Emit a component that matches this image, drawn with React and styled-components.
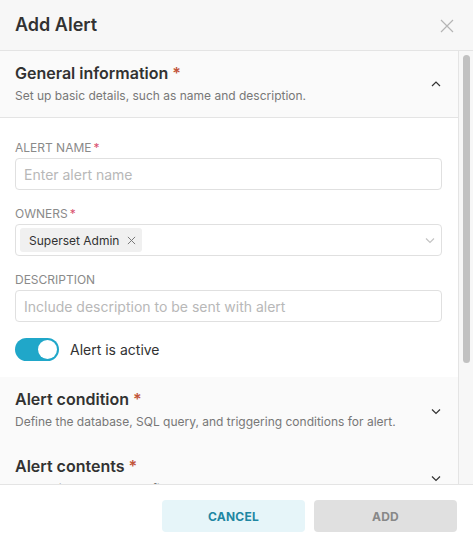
import React from "react";
import styled, { createGlobalStyle } from "styled-components";

const Global = createGlobalStyle`
  html, body { margin: 0; padding: 0; }
  body { font-family: Inter, "Noto Sans", sans-serif; color: #323232; background: #fff; }
  * { box-sizing: border-box; }
`;

const Modal = styled.div`
  width: 473px;
  height: 547px;
  display: flex;
  flex-direction: column;
  background: #fff;
`;

const Header = styled.div`
  height: 51px;
  flex: none;
  display: flex;
  align-items: center;
  justify-content: space-between;
  padding: 0 18px 2px 15px;
  background: #f7f7f7;
  border-bottom: 1px solid #e4e4e4;
`;

const Title = styled.h1`
  margin: 0;
  font-size: 18px;
  font-weight: 600;
  color: #323232;
`;

const Close = styled.svg`
  width: 16px;
  height: 16px;
  margin-top: 4px;
`;

const Body = styled.div`
  flex: 1;
  min-height: 0;
  display: flex;
  background: #f7f7f7;
`;

const Viewport = styled.div`
  flex: 1;
  min-width: 0;
  overflow: hidden;
`;

const Track = styled.div`
  width: 14px;
  flex: none;
  padding: 4px 3px 0 4px;
  background: #f7f7f7;
`;

const Thumb = styled.div`
  height: 308px;
  border-radius: 4px;
  background: #c1c1c1;
`;

const Panels = styled.div`
  border-right: 1px solid #e4e4e4;
  background: #fff;
`;

const PanelHeader = styled.div`
  height: 67px;
  display: flex;
  align-items: center;
  justify-content: space-between;
  padding: 0 16px 0 15px;
  background: #fafafa;
  border-bottom: ${(p) => (p.$open ? "1px solid #e4e4e4" : "none")};
`;

const PanelText = styled.div`
  display: flex;
  flex-direction: column;
  gap: 5px;
  margin-top: -2px;
`;

const PanelTitle = styled.div`
  font-size: 16px;
  font-weight: 600;
  color: #323232;
  line-height: 20px;
`;

const Star = styled.span`
  color: #c2553a;
  margin-left: 4px;
`;

const PanelSub = styled.div`
  font-size: 12px;
  color: #777;
  line-height: 16px;
`;

const Chevron = styled.svg`
  width: 12px;
  height: 12px;
`;

const Content = styled.div`
  padding: 22px 16px 16px 15px;
  display: flex;
  flex-direction: column;
`;

const Field = styled.div`
  display: flex;
  flex-direction: column;
  gap: 3px;
  margin-bottom: 16px;
`;

const Label = styled.label`
  font-size: 12px;
  color: #8a8a8a;
  text-transform: uppercase;
  line-height: 15px;
`;

const Req = styled.span`
  color: #d9506e;
  margin-left: 2px;
`;

const Input = styled.input`
  height: 32px;
  width: 100%;
  border: 1px solid #e0e0e0;
  border-radius: 4px;
  padding: 0 8px;
  font-family: inherit;
  font-size: 14px;
  color: #323232;
  outline: none;
  &::placeholder { color: #b8b8b8; }
`;

const Select = styled.div`
  height: 32px;
  border: 1px solid #e0e0e0;
  border-radius: 4px;
  display: flex;
  align-items: center;
  justify-content: space-between;
  padding: 0 5px 0 4px;
`;

const Tag = styled.div`
  height: 24px;
  background: #f0f0f0;
  border-radius: 3px;
  display: flex;
  align-items: center;
  gap: 8px;
  padding: 0 6px 0 9px;
  font-size: 12px;
  color: #323232;
`;

const ToggleRow = styled.div`
  display: flex;
  align-items: center;
  gap: 11px;
  height: 23px;
`;

const Switch = styled.div`
  width: 44px;
  height: 23px;
  border-radius: 12px;
  background: #20a7c9;
  display: flex;
  align-items: center;
  justify-content: flex-end;
  padding: 2px;
`;

const Knob = styled.div`
  width: 19px;
  height: 19px;
  border-radius: 50%;
  background: #fff;
`;

const ToggleLabel = styled.span`
  font-size: 14px;
  color: #323232;
`;

const Footer = styled.div`
  flex: none;
  height: 63px;
  border-top: 1px solid #e4e4e4;
  display: flex;
  justify-content: flex-end;
  align-items: center;
  gap: 9px;
  padding: 0 16px 0 0;
  background: #fff;
`;

const Button = styled.button`
  width: 143px;
  height: 32px;
  border: none;
  border-radius: 4px;
  font-family: inherit;
  font-size: 12px;
  font-weight: 700;
  letter-spacing: 0.2px;
  text-transform: uppercase;
  background: ${(p) => (p.$primary ? "#e0e0e0" : "#e6f5f9")};
  color: ${(p) => (p.$primary ? "#888" : "#1f87a3")};
`;

const Up = () => (
  <Chevron viewBox="0 0 12 12" fill="none" stroke="#323232" strokeWidth="1.2">
    <path d="M2 8L6 4l4 4" />
  </Chevron>
);
const Down = ({ color = "#323232" }) => (
  <Chevron viewBox="0 0 12 12" fill="none" stroke={color} strokeWidth="1.2">
    <path d="M2 4.5l4 4 4-4" />
  </Chevron>
);

const panels = [
  { t: "Alert condition", s: "Define the database, SQL query, and triggering conditions for alert." },
  { t: "Alert contents", s: "Customize data source, filters, and layout." },
  { t: "Alert schedule", s: "Define delivery schedule, timezone, and frequency settings." },
  { t: "Notification method", s: "Choose notification method and recipients." },
];

export default function App() {
  return (
    <>
      <Global />
      <Modal>
        <Header>
          <Title>Add Alert</Title>
          <Close viewBox="0 0 16 16" fill="none" stroke="#b5b5b5" strokeWidth="1.2">
            <path d="M2 2l12 12M14 2L2 14" />
          </Close>
        </Header>
        <Body>
          <Viewport>
            <Panels>
              <PanelHeader $open>
                <PanelText>
                  <PanelTitle>
                    General information<Star>*</Star>
                  </PanelTitle>
                  <PanelSub>Set up basic details, such as name and description.</PanelSub>
                </PanelText>
                <Up />
              </PanelHeader>
              <Content>
                <Field>
                  <Label>
                    Alert name<Req>*</Req>
                  </Label>
                  <Input placeholder="Enter alert name" />
                </Field>
                <Field>
                  <Label>
                    Owners<Req>*</Req>
                  </Label>
                  <Select>
                    <Tag>
                      Superset Admin
                      <svg width="9" height="9" viewBox="0 0 10 10" fill="none" stroke="#777" strokeWidth="1.1">
                        <path d="M1 1l8 8M9 1L1 9" />
                      </svg>
                    </Tag>
                    <Down color="#c4c4c4" />
                  </Select>
                </Field>
                <Field>
                  <Label>Description</Label>
                  <Input placeholder="Include description to be sent with alert" />
                </Field>
                <ToggleRow>
                  <Switch>
                    <Knob />
                  </Switch>
                  <ToggleLabel>Alert is active</ToggleLabel>
                </ToggleRow>
              </Content>
              {panels.map((p) => (
                <PanelHeader key={p.t}>
                  <PanelText>
                    <PanelTitle>
                      {p.t}
                      <Star>*</Star>
                    </PanelTitle>
                    <PanelSub>{p.s}</PanelSub>
                  </PanelText>
                  <Down />
                </PanelHeader>
              ))}
            </Panels>
          </Viewport>
          <Track>
            <Thumb />
          </Track>
        </Body>
        <Footer>
          <Button>Cancel</Button>
          <Button $primary>Add</Button>
        </Footer>
      </Modal>
    </>
  );
}
